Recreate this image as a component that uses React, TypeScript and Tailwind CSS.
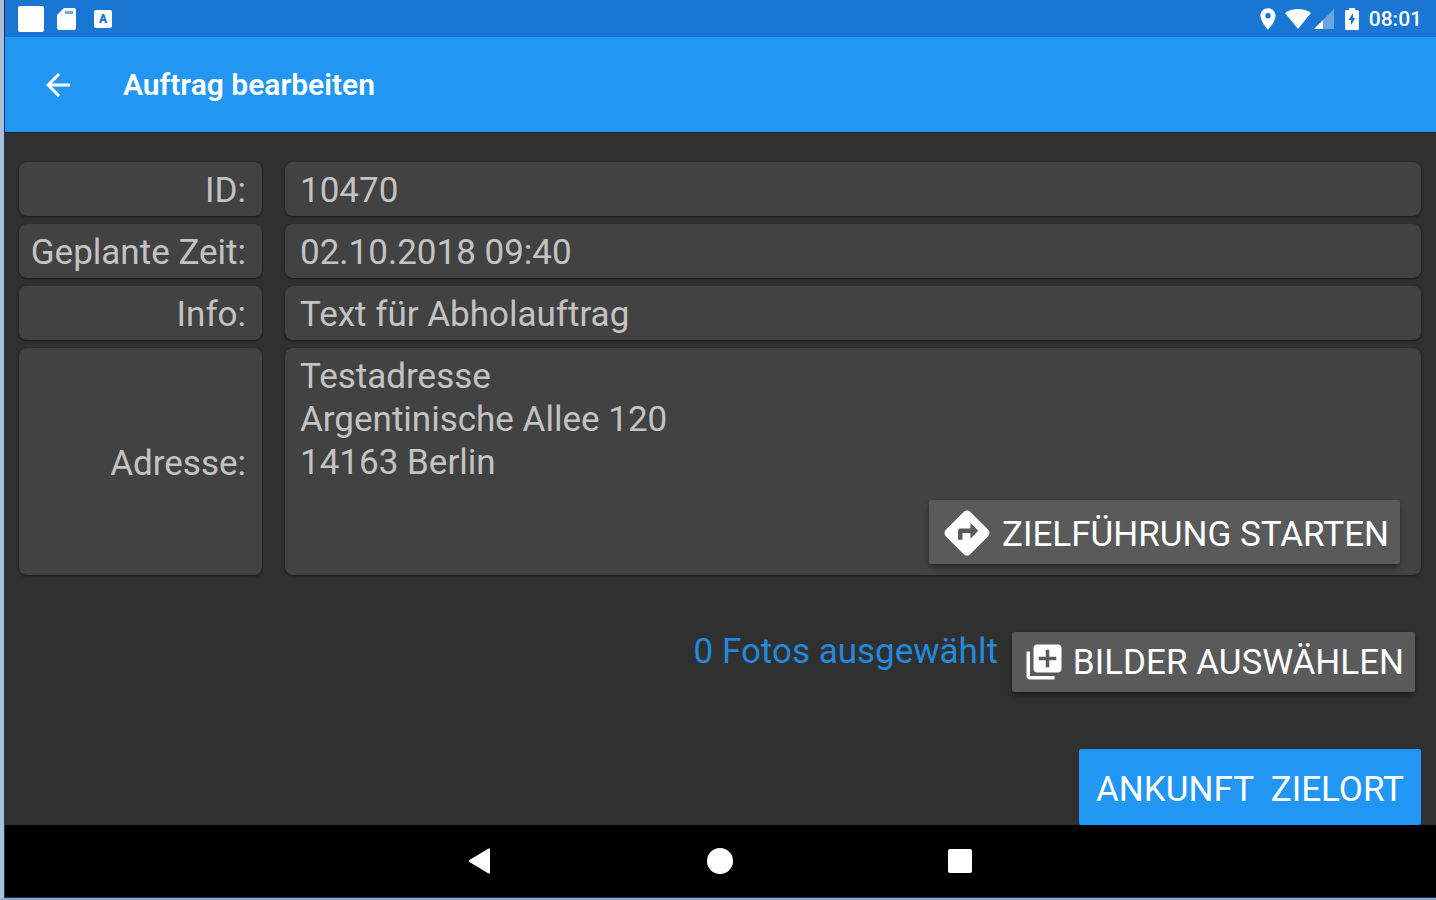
import React from "react";
import { MdAddToPhotos, MdArrowBack, MdDirections, MdLocationOn } from "react-icons/md";

interface FieldProps {
  label: string;
  children: React.ReactNode;
}

function Field({ label, children }: FieldProps) {
  return (
    <div className="grid grid-cols-[243px_1fr] gap-[23px]">
      <dt className="flex items-center justify-end rounded-lg bg-[#424242] px-4 pt-[7px] pb-1 whitespace-nowrap shadow-sm shadow-black/40">
        {label}
      </dt>
      <dd className="rounded-lg bg-[#424242] px-[15px] pt-[7px] pb-1 shadow-sm shadow-black/40">{children}</dd>
    </div>
  );
}

function StatusBar() {
  return (
    <div className="flex h-[37px] items-center justify-between bg-[#1976d2] pr-[14px] pl-[13px] text-white">
      <div className="flex items-center">
        <span className="size-[26px] rounded-xs bg-white" />
        <svg viewBox="0 0 19 22" className="ml-[13px] h-[22px] w-[19px]" fill="currentColor">
          <path d="M7 0h10a2 2 0 0 1 2 2v18a2 2 0 0 1-2 2H2a2 2 0 0 1-2-2V7z" />
          <path d="M8 3h8v3H8z" fill="#1976d2" opacity="0.65" />
        </svg>
        <span className="ml-[18px] flex size-[18px] items-center justify-center rounded-xs bg-white text-xs font-black text-[#1976d2]">
          A
        </span>
      </div>
      <div className="flex items-center">
        <MdLocationOn className="size-[26px]" />
        <svg viewBox="0 0 26 20" className="ml-[4px] h-5 w-[26px]" fill="currentColor">
          <path d="M0 4C7-1.300 19-1.300 26 4L13 20z" />
        </svg>
        <svg viewBox="0 0 20 20" className="ml-[3px] size-5" fill="currentColor">
          <path d="M0 20L20 0v20z" opacity="0.35" />
          <path d="M0 20l9-9v9z" />
        </svg>
        <svg viewBox="0 0 14 22" className="ml-[11px] h-[22px] w-[14px]" fill="currentColor">
          <path
            fillRule="evenodd"
            d="M4 0h6v2h2.500A1.500 1.500 0 0 1 14 3.500v17a1.500 1.500 0 0 1-1.500 1.500h-11A1.500 1.500 0 0 1 0 20.500v-17A1.500 1.500 0 0 1 1.500 2H4zM8 5l-4.500 7H6v5l4.500-7H8z"
          />
        </svg>
        <span className="ml-[10px] text-[21px] leading-6 font-medium">08:01</span>
      </div>
    </div>
  );
}

function NavigationBar() {
  return (
    <nav className="flex h-[72px] items-center justify-center gap-[192px] bg-black pr-[2px] text-white">
      <button type="button" aria-label="Zurück" className="flex size-12 items-center justify-center">
        <svg viewBox="0 0 24 28" className="h-7 w-6" fill="currentColor">
          <path d="M22 2.500v23a1 1 0 0 1-1.500.9L1.500 15a1.200 1.200 0 0 1 0-2l19-11.400A1 1 0 0 1 22 2.500z" />
        </svg>
      </button>
      <button type="button" aria-label="Startseite" className="flex size-12 items-center justify-center">
        <span className="size-[26px] rounded-full bg-white" />
      </button>
      <button type="button" aria-label="Übersicht" className="flex size-12 items-center justify-center">
        <span className="size-6 rounded-xs bg-white" />
      </button>
    </nav>
  );
}

export default function App() {
  return (
    <div className="flex min-h-screen flex-col border-b-2 border-l-4 border-b-[#8ea6cc] border-l-[#adbdd8] font-['Roboto',sans-serif]">
      <div className="flex grow flex-col border-b border-l border-[#12355f] bg-[#303030]">
        <StatusBar />
        <header className="flex h-[95px] items-center bg-[#2196f3] px-[35px] text-white">
          <button type="button" aria-label="Zurück">
            <MdArrowBack className="size-9" />
          </button>
          <h1 className="ml-[47px] text-[30px] font-semibold">Auftrag bearbeiten</h1>
        </header>

        <main className="flex grow flex-col border-t border-[#241c14] pt-[29px] pr-[15px] pl-[14px] text-[35px] leading-[43px] text-[#c3c3c3]">
          <dl className="flex flex-col gap-2">
            <Field label="ID:">10470</Field>
            <Field label="Geplante Zeit:">02.10.2018 09:40</Field>
            <Field label="Info:">Text für Abholauftrag</Field>
            <Field label="Adresse:">
              <address className="not-italic">
                Testadresse
                <br />
                Argentinische Allee 120
                <br />
                14163 Berlin
              </address>
              <div className="mt-4 mr-[6px] mb-[7px] flex justify-end">
                <button
                  type="button"
                  className="flex h-16 items-center gap-2 rounded-xs bg-[#5a5a5a] px-[11px] pt-[2px] text-white shadow-md shadow-black/40"
                >
                  <MdDirections className="size-[54px]" />
                  <span className="pt-[2px]">ZIELFÜHRUNG STARTEN</span>
                </button>
              </div>
            </Field>
          </dl>

          <div className="mt-[57px] mr-[6px] flex items-start justify-end gap-[14px] leading-10">
            <span className="text-[#2488dc]">0 Fotos ausgewählt</span>
            <button
              type="button"
              className="flex h-[60px] items-center gap-2 rounded-xs bg-[#5a5a5a] px-[11px] text-white shadow-md shadow-black/40"
            >
              <MdAddToPhotos className="size-[42px]" />
              <span className="pt-[2px]">BILDER AUSWÄHLEN</span>
            </button>
          </div>

          <button
            type="button"
            className="mt-auto h-[76px] self-end rounded-xs bg-[#2196f3] px-[17px] pt-1 whitespace-pre text-white"
          >
            {"ANKUNFT  ZIELORT"}
          </button>
        </main>
        <NavigationBar />
      </div>
    </div>
  );
}
